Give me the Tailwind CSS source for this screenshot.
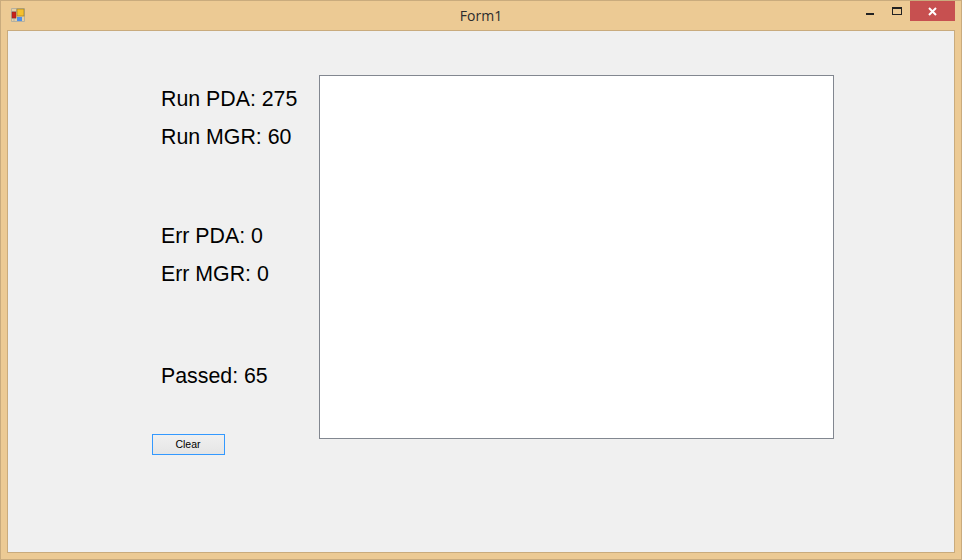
<!DOCTYPE html>
<html>
<head>
<meta charset="utf-8">
<script src="https://cdn.jsdelivr.net/npm/@tailwindcss/browser@4"></script>
</head>
<body class="m-0 overflow-hidden bg-[#ecca94]">
<div class="flex h-[560px] w-[962px] flex-col border border-[#c9ab7d] bg-[#ecca94] font-['Liberation_Sans',sans-serif] text-black">
  <header class="flex h-[29px] shrink-0 items-start">
    <div class="w-[100px] shrink-0 pl-[10px] pt-[7px]">
      <svg width="14" height="14" viewBox="0 0 14 14" class="block">
        <path d="M0.5 0.5H13.5V13.5H0.5ZM0.5 3.5H5M5.5 0.5V4M0.5 10.5H5M3 10.5V13.5" fill="#e4cfa6" stroke="#b4b0a0"/>
        <rect x="1" y="4" width="4" height="6" fill="#c9201c" stroke="#8c2a20" stroke-width="0.5"/>
        <rect x="6" y="1" width="7" height="7" fill="#f5c02c" stroke="#a8852f" stroke-width="0.8"/>
        <rect x="6" y="9" width="5" height="4" fill="#4f8fe8"/>
      </svg>
    </div>
    <div class="flex-1 pt-[7px] text-center font-['Open_Sans',sans-serif] text-[14px] leading-[16px] text-[#2c2c2c]">Form1</div>
    <div class="flex w-[100px] shrink-0 items-start">
      <div class="ml-[5px] mt-[12px] h-[2px] w-[8px] bg-[#222]"></div>
      <div class="ml-[18px] mt-[6px] h-[8px] w-[10px] border border-t-2 border-[#222]"></div>
      <div class="ml-[8px] flex h-[20px] w-[45px] items-center justify-center bg-[#c75050]">
        <svg width="9" height="9" viewBox="0 0 9 9"><path d="M1 1L8 8M8 1L1 8" stroke="#fff" stroke-width="2"/></svg>
      </div>
    </div>
  </header>
  <main class="mx-[6px] flex h-[523px] border border-[#c9ab7d] bg-[#f0f0f0] pl-[144px] pt-[44px]">
    <section class="flex w-[167px] shrink-0 flex-col">
      <div class="pl-[9px] text-[21.33px] leading-[38px]">
        <div class="mt-[5px] h-[38px]">Run PDA: 275</div>
        <div class="h-[38px]">Run MGR: 60</div>
        <div class="mt-[61px] h-[38px]">Err PDA: 0</div>
        <div class="h-[38px]">Err MGR: 0</div>
        <div class="mt-[64px] h-[38px]">Passed: 65</div>
      </div>
      <button class="mt-[39px] h-[21px] w-[73px] border border-[#3399ff] bg-gradient-to-b from-[#f0f0f0] to-[#e5e5e5] pr-[1px] text-[10.5px] leading-[19px] text-black">Clear</button>
    </section>
    <div class="h-[364px] w-[515px] border border-[#828790] bg-white"></div>
  </main>
</div>
</body>
</html>
